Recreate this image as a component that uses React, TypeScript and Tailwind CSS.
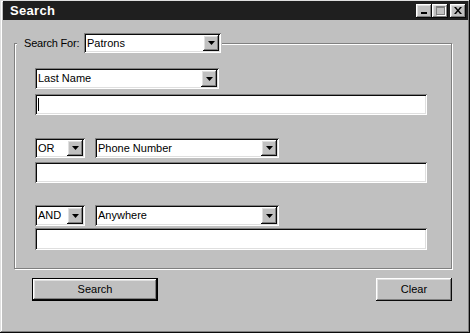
import React from "react";

const sunken =
  "shadow-[inset_1px_1px_0_#808080,inset_-1px_-1px_0_#ffffff,inset_2px_2px_0_#0a0a0a,inset_-2px_-2px_0_#dfdfdf]";
const raised =
  "shadow-[inset_-1px_-1px_0_#0a0a0a,inset_1px_1px_0_#ffffff,inset_-2px_-2px_0_#808080,inset_2px_2px_0_#dfdfdf]";

function DropButton() {
  return (
    <div className={`flex w-[16px] items-center justify-center bg-[#c0c0c0] ${raised}`}>
      <svg width="7" height="4" viewBox="0 0 7 4">
        <polygon points="0,0 7,0 3.5,4" fill="#000" />
      </svg>
    </div>
  );
}

function Combo({ value, className }: { value: string; className: string }) {
  return (
    <div className={`flex bg-white p-[2px] ${sunken} ${className}`}>
      <span className="flex flex-1 items-center overflow-hidden whitespace-nowrap pl-[1px]">{value}</span>
      <DropButton />
    </div>
  );
}

function TextBox({ className, caret }: { className: string; caret?: boolean }) {
  return (
    <div className={`flex w-[392px] items-center bg-white px-[3px] ${sunken} ${className}`}>
      {caret ? <span className="h-[13px] w-[1px] bg-black" /> : null}
    </div>
  );
}

function TitleButton({ children, gap }: { children: React.ReactNode; gap?: boolean }) {
  return (
    <div
      className={`flex h-[14px] w-[16px] items-center justify-center bg-[#c0c0c0] ${raised} ${gap ? "ml-[2px]" : ""}`}
    >
      {children}
    </div>
  );
}

export default function App() {
  return (
    <div className="h-[335px] w-[471px] bg-white font-['Liberation_Sans',Arial,sans-serif] text-[11px] text-black">
      <div
        className={`flex h-[333px] w-[470px] flex-col bg-[#c0c0c0] pl-[3px] pr-[2px] pt-[1px] shadow-[inset_-1px_-1px_0_#0a0a0a,inset_1px_1px_0_#dfdfdf,inset_-2px_-2px_0_#808080,inset_2px_2px_0_#ffffff]`}
      >
        {/* title bar */}
        <div className="flex h-[19px] items-center bg-[#1f1f1f] pl-[7px] pr-[2px]">
          <span className="flex-1 text-[13px] font-bold tracking-[0.3px] text-white">Search</span>
          <TitleButton>
            <span className="mt-[5px] h-[2px] w-[6px] bg-black" />
          </TitleButton>
          <TitleButton>
            <span className="h-[9px] w-[9px] border border-t-2 border-[#808080] shadow-[1px_1px_0_#ffffff]" />
          </TitleButton>
          <TitleButton gap>
            <svg width="8" height="7" viewBox="0 0 8 7">
              <path d="M0 0h2l2 2.5L6 0h2L5 3.5 8 7H6L4 4.5 2 7H0l3-3.5z" fill="#000" />
            </svg>
          </TitleButton>
        </div>

        {/* group box */}
        <fieldset className="ml-[11px] mt-[13px] w-[438px] border border-[#808080] pb-[18px] pl-[20px] pt-[15px] shadow-[1px_1px_0_#ffffff,inset_1px_1px_0_#ffffff]">
          <legend className="ml-[-18px] flex items-center bg-[#c0c0c0] pl-[7px] pr-[1px]">
            <span className="w-[60px] whitespace-nowrap tracking-[-0.2px]">Search For:</span>
            <Combo value="Patrons" className="h-[20px] w-[137px]" />
          </legend>

          <Combo value="Last Name" className="h-[21px] w-[184px]" />
          <TextBox className="mt-[5px] h-[21px]" caret />

          <div className="mt-[23px] flex gap-[10px]">
            <Combo value="OR" className="h-[20px] w-[50px]" />
            <Combo value="Phone Number" className="h-[20px] w-[184px]" />
          </div>
          <TextBox className="mt-[4px] h-[21px]" />

          <div className="mt-[22px] flex gap-[10px]">
            <Combo value="AND" className="h-[21px] w-[50px]" />
            <Combo value="Anywhere" className="h-[21px] w-[184px]" />
          </div>
          <TextBox className="mt-[2px] h-[22px]" />
        </fieldset>

        {/* buttons */}
        <div className="ml-[29px] mr-[16px] mt-[9px] flex justify-between">
          <div className="h-[23px] w-[126px] border border-black">
            <div className={`flex h-full w-full items-center justify-center ${raised}`}>Search</div>
          </div>
          <div className={`flex h-[23px] w-[76px] items-center justify-center ${raised}`}>Clear</div>
        </div>
      </div>
    </div>
  );
}
